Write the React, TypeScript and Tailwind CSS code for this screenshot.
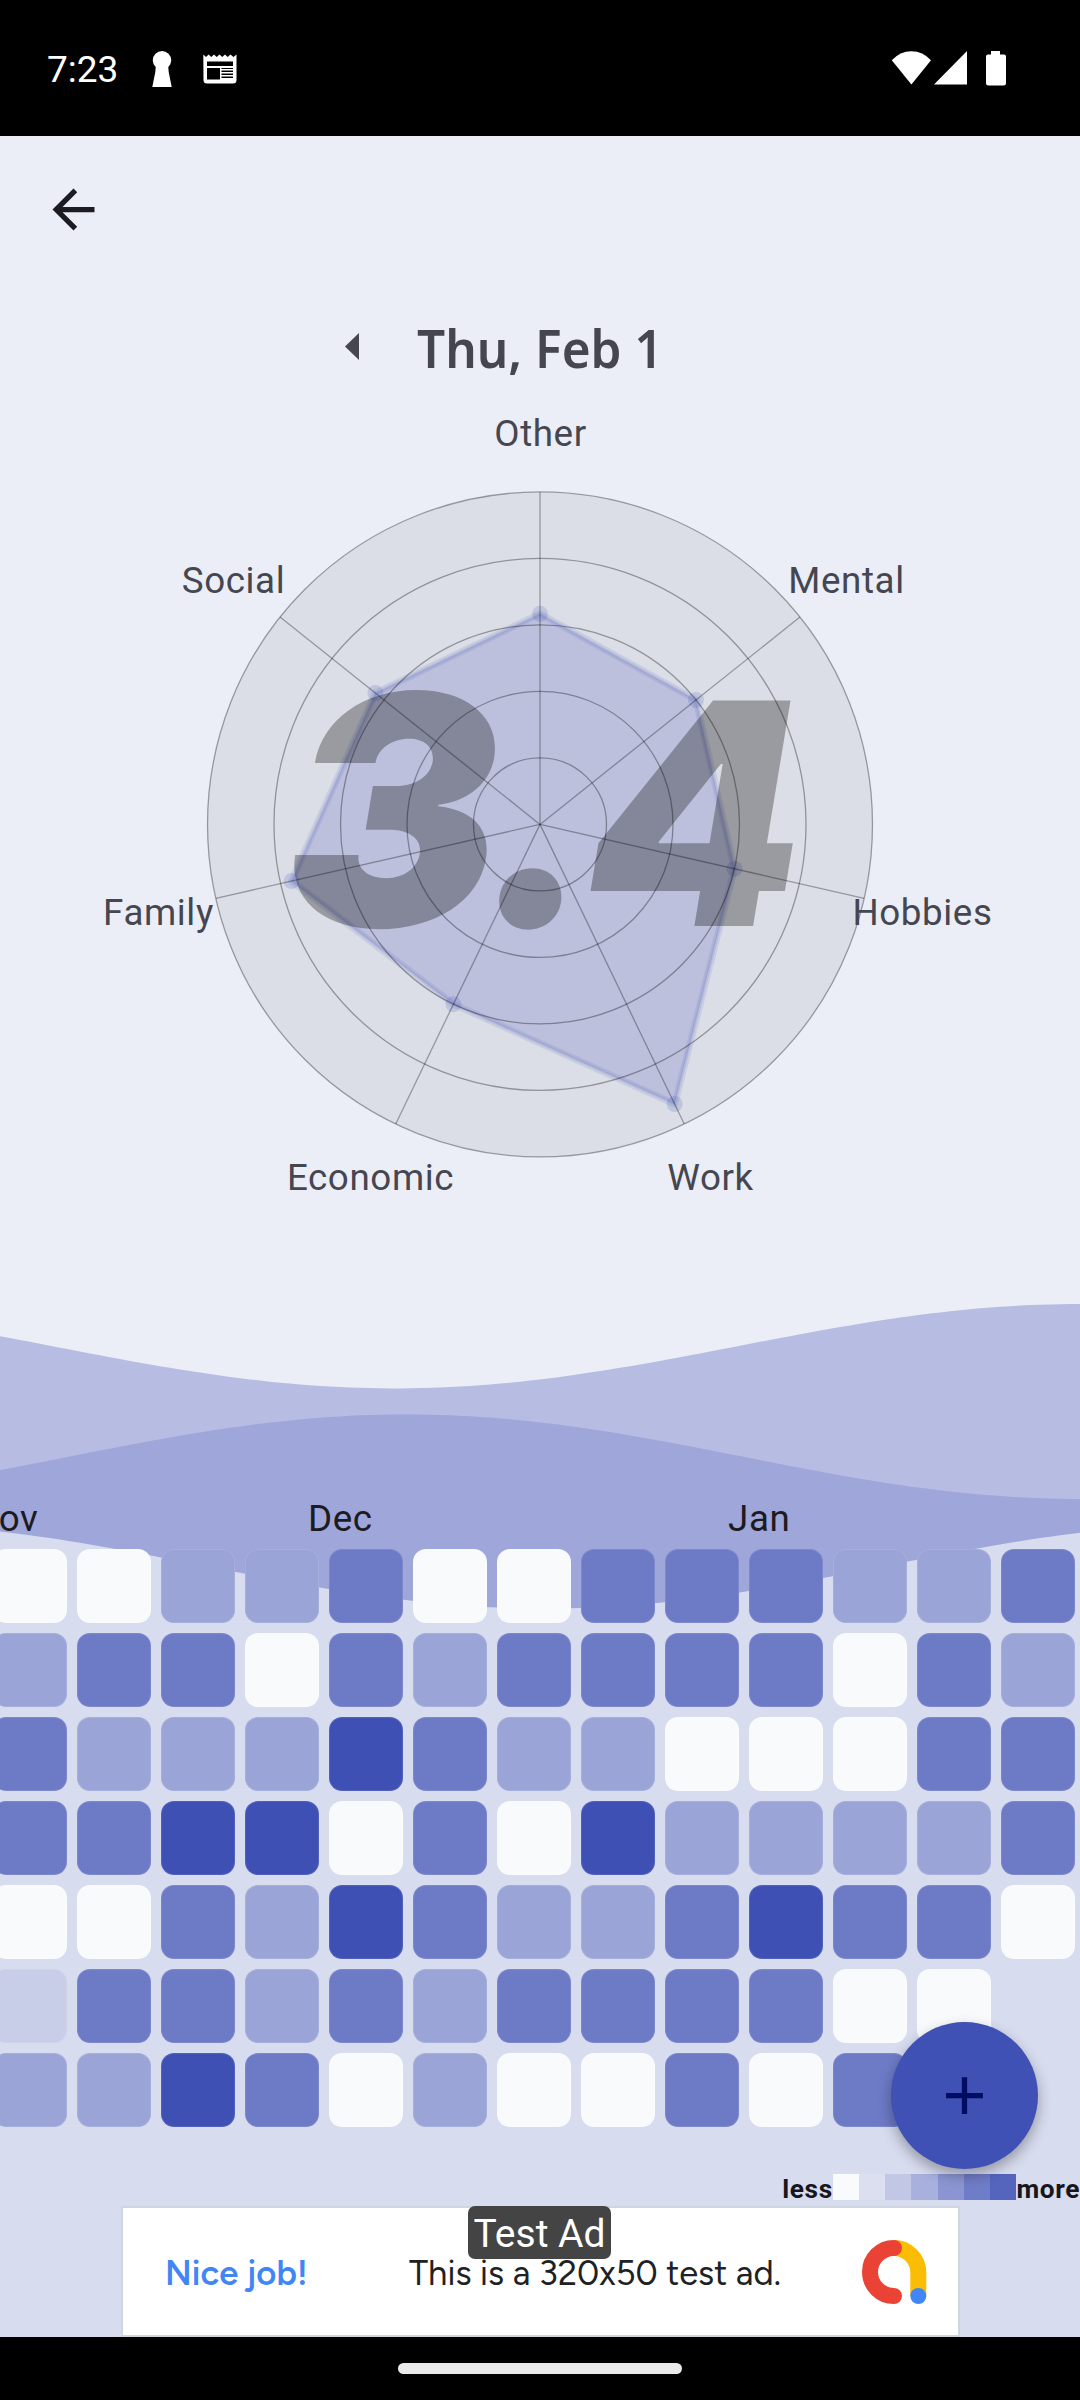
const CENTER = { x: 540, y: 824.4 };
const RADIUS = 332.5;

const categories = [
  { label: 'Other', score: 19 / 30, x: 540.5, y: 445.5 },
  { label: 'Mental', score: 18 / 30, x: 846.5, y: 593 },
  { label: 'Hobbies', score: 18 / 30, x: 922.5, y: 925 },
  { label: 'Work', score: 28 / 30, x: 710.5, y: 1190 },
  { label: 'Economic', score: 18 / 30, x: 370.5, y: 1190 },
  { label: 'Family', score: 23 / 30, x: 158.5, y: 925 },
  { label: 'Social', score: 19 / 30, x: 233.5, y: 593 },
];

// One string per weekday, one character per week: 0 is empty, 4 is the fullest day.
const weeks = [
  '0022300333223',
  '2330323333032',
  '3222432200033',
  '3344030422223',
  '0032432234330',
  '133232333300-',
  '22430200303--',
];

const cellColors: Record<string, string> = {
  '0': 'bg-[#f9fafc]',
  '1': 'bg-[#c9cee8]',
  '2': 'bg-[#9ba4d7]',
  '3': 'bg-[#6d7ac6]',
  '4': 'bg-[#3f50b5]',
  '-': 'invisible',
};

const legendColors = [
  'bg-[#f9fafc]',
  'bg-[#dcdff0]',
  'bg-[#c2c7e5]',
  'bg-[#a8b1de]',
  'bg-[#8b95d1]',
  'bg-[#6f7cc7]',
  'bg-[#5565be]',
];

const polar = (index: number, ratio: number) => {
  const angle = (index * 2 * Math.PI) / categories.length;
  return {
    x: CENTER.x + RADIUS * ratio * Math.sin(angle),
    y: CENTER.y - RADIUS * ratio * Math.cos(angle),
  };
};

const wavePath = (middle: number, extremeX: number, amplitude: number, half: number) => {
  let d = 'M0 2337';
  for (let x = 0; x <= 1080; x += 10) {
    const y = middle + amplitude * Math.cos((Math.PI * (x - extremeX)) / half);
    d += `L${x} ${y.toFixed(2)}`;
  }
  return `${d}V2337Z`;
};

const StatusBar = () => (
  <header className="flex h-[136px] shrink-0 items-start justify-between bg-black pt-[47px] pr-[74px] pl-[47px] text-white">
    <div className="flex">
      <span className="mt-px w-[105px] text-[37px] leading-[44px]">7:23</span>
      <svg className="mt-[4px]" width="20" height="36" viewBox="0 0 20 36" fill="currentColor">
        <circle cx="10" cy="9.2" r="9.2" />
        <path d="M4 13h12l.7 8L19.700 36H.3L3.300 21z" />
      </svg>
      <svg className="mt-[7px] ml-[31px]" width="34" height="30" viewBox="0 0 34 30">
        <path
          fill="#fff"
          d="M.3.5 3 3 5.600.5 8.300 3 11 .5 13.700 3 16.500.5 19.200 3 22 .5 24.700 3 27.400.5 30.500 3 33.500.5V26a3.500 3.500 0 0 1-3.500 3.500H4A3.500 3.500 0 0 1 .5 26z"
        />
        <path
          fill="#000"
          d="M4 7.500h26v4.500H4zM4 14h13v11.500H4zM18.500 14H30v1H18.500zM18.500 16.500H30v1.500H18.500zM18.500 19.500H30V21H18.500zM18.500 22.500H30V24H18.500z"
        />
      </svg>
    </div>
    <svg className="mt-[4px]" width="115" height="35" viewBox="0 0 115 35" fill="currentColor">
      <path d="M.8 9.200Q9 .2 20.400.2T40 9.200L20.400 33.500z" />
      <path d="M43 33.500 76 0v33.500z" />
      <path d="M100 0h9v3.500h4a2 2 0 0 1 2 2V32a2.500 2.500 0 0 1-2.500 2.500h-15A2.500 2.500 0 0 1 95 32V5.500a2 2 0 0 1 2-2h3z" />
    </svg>
  </header>
);

const Background = () => (
  <svg className="absolute inset-0" width="1080" height="2400" viewBox="0 0 1080 2400">
    <path fill="#b7bde2" d={wavePath(1346.2, 395, 42.2, 685)} />
    <path fill="#9fa6d9" d={wavePath(1456.7, 406, -42.3, 674)} />
    <path fill="#d8dcef" d={wavePath(1566, 545, 42.5, 680)} />
  </svg>
);

const RadarChart = () => {
  const points = categories.map((category, index) => polar(index, category.score));
  const outline = points.map(({ x, y }) => `${x},${y}`).join(' ');

  return (
    <svg className="block shrink-0 font-[Roboto,sans-serif]" width="1080" height="820" viewBox="0 410 1080 820">
      <circle cx={CENTER.x} cy={CENTER.y} r={RADIUS} fill="#dbdee6" />
      <polygon points={outline} fill="#bdc0dd" stroke="#3f51b5" strokeOpacity="0.12" strokeWidth="7" strokeLinejoin="round" />
      <polygon points={outline} fill="none" stroke="#3f51b5" strokeOpacity="0.12" strokeWidth="3" />
      {points.map(({ x, y }) => (
        <circle key={`${x}_${y}`} cx={x} cy={y} r="8" fill="#3f51b5" fillOpacity="0.18" />
      ))}
      <text
        className="font-[Inter,sans-serif]"
        x="286 482 586"
        y="926"
        fontSize="310"
        fontWeight="900"
        fontStyle="italic"
        fillOpacity="0.3"
      >
        <tspan fontSize="320">3</tspan>.4
      </text>
      {[1, 2, 3, 4, 5].map((ring) => (
        <circle
          key={ring}
          cx={CENTER.x}
          cy={CENTER.y}
          r={(RADIUS * ring) / 5}
          fill="none"
          stroke="#000"
          strokeOpacity="0.34"
          strokeWidth="1.3"
        />
      ))}
      {categories.map(({ label }, index) => {
        const end = polar(index, 1);
        return (
          <line
            key={label}
            x1={CENTER.x}
            y1={CENTER.y}
            x2={end.x}
            y2={end.y}
            stroke="#000"
            strokeOpacity="0.32"
            strokeWidth="1.3"
          />
        );
      })}
      {categories.map(({ label, x, y }) => (
        <text key={label} x={x} y={y} textAnchor="middle" fontSize="36.75" letterSpacing="0.6" fill="#45464f">
          {label}
        </text>
      ))}
    </svg>
  );
};

const Heatmap = () => (
  <section className="relative mt-[266px] text-[#1b1b21]">
    <div className="flex h-[53.400px] pt-px text-[36.750px] leading-[43px] tracking-[0.6px]">
      <span className="-ml-[28px] w-[336px]">Nov</span>
      <span className="w-[420px]">Dec</span>
      <span>Jan</span>
    </div>
    <div className="-ml-[6.700px] flex w-[1092px] flex-col gap-[10.500px]">
      {weeks.map((days, row) => (
        <div key={row} className="flex gap-[10.500px]">
          {days.split('').map((level, column) => (
            <div key={column} className={`size-[73.500px] rounded-[13px] border border-white/10 ${cellColors[level]}`} />
          ))}
        </div>
      ))}
    </div>
  </section>
);

const Legend = () => (
  <div className="relative mt-[47px] flex h-[26px] items-center justify-end text-[26.250px] leading-[26px] font-bold tracking-[0.6px] text-[#16161c]">
    <span className="mt-[4px]">less</span>
    <div className="flex">
      {legendColors.map((color) => (
        <div key={color} className={`h-[26px] w-[26.250px] ${color}`} />
      ))}
    </div>
    <span className="mt-[4px]">more</span>
  </div>
);

const AdBanner = () => (
  <div className="relative mt-[6px] ml-[121px] flex h-[131px] w-[839px] items-center border-2 border-[#d0d6e1] bg-white font-[Figtree,Lato,sans-serif] text-[34.600px] text-[#202124]">
    <span className="mt-[6px] ml-[42px] w-[244px] font-semibold text-[#4285f4]">Nice job!</span>
    <span className="mt-[6px]">This is a 320x50 test ad.</span>
    <svg className="absolute top-[32px] left-[740px] overflow-visible" width="64" height="64" viewBox="0 0 64 64" fill="none" strokeWidth="16">
      <path stroke="#fbbc04" d="M31 8a24.300 24.300 0 0 1 24.300 24.300V56" />
      <path stroke="#ea4335" strokeLinecap="round" d="M31 8a24 24 0 0 0 0 48" />
      <circle cx="55.300" cy="56" r="8" fill="#4285f4" />
    </svg>
    <span className="absolute -top-[2px] left-[345px] flex h-[53px] w-[143px] items-center justify-center rounded-[7px] bg-[#444] pt-[4px] font-[Roboto,sans-serif] text-[39px] text-white">
      Test Ad
    </span>
  </div>
);

export default function App() {
  return (
    <div className="relative flex h-[2400px] w-[1080px] flex-col overflow-hidden bg-[#ebeef7] font-[Roboto,sans-serif]">
      <Background />
      <StatusBar />
      <main className="relative flex h-[2201px] flex-col">
        <button className="mt-[42px] ml-[42px] size-[63px] text-[#1b1b21]">
          <svg viewBox="0 0 24 24" fill="currentColor">
            <path d="M20 11H7.830l5.590-5.590L12 4l-8 8 8 8 1.410-1.410L7.830 13H20v-2z" />
          </svg>
        </button>
        <div className="mt-[69px] flex h-[80px] items-center pl-[345px] text-[#45464f]">
          <svg className="-mt-[8px]" width="14" height="27" viewBox="0 0 14 27" fill="currentColor">
            <path d="M14 0v27L0 13.500z" />
          </svg>
          <h1 className="-mt-[4px] ml-[58px] origin-left scale-x-[0.934] font-['Noto_Sans',sans-serif] text-[53px] leading-[60px] font-semibold">
            Thu, Feb 1
          </h1>
        </div>
        <div className="mt-[20px]">
          <RadarChart />
        </div>
        <Heatmap />
        <Legend />
        <AdBanner />
        <button className="absolute top-[1886px] left-[891px] flex size-[147px] items-center justify-center rounded-full bg-[#3f51b5] text-[#000c61] shadow-[0_6px_14px_rgba(0,0,0,0.32)]">
          <svg width="63" height="63" viewBox="0 0 24 24" fill="currentColor">
            <path d="M19 13h-6v6h-2v-6H5v-2h6V5h2v6h6v2z" />
          </svg>
        </button>
      </main>
      <footer className="relative flex h-[63px] justify-center bg-black pt-[26px]">
        <div className="h-[11px] w-[284px] rounded-full bg-[#eaeaea]" />
      </footer>
    </div>
  );
}
